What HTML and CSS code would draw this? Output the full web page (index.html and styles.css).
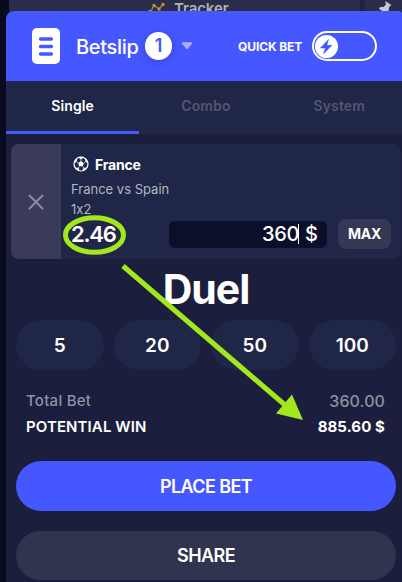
FILE: index.html
```
<!DOCTYPE html>
<html lang="en">
<head>
<meta charset="utf-8">
<title>Betslip</title>
<link rel="stylesheet" href="styles.css">
</head>

<body>

<div class="page">
  <div class="backdrop">
    <div class="backdrop__tab">
      <svg class="backdrop__chart" width="18" height="16" viewBox="0 0 18 16">
        <path d="M2 14 6 6.500 11 10 15 5.500" fill="none" stroke="#a98a35" stroke-width="1.300"/>
        <g fill="#b8932e">
          <circle cx="2" cy="12.500" r="1.700"/>
          <circle cx="6" cy="6.500" r="1.700"/>
          <circle cx="11" cy="10" r="1.700"/>
          <circle cx="15" cy="5.500" r="1.700"/>
        </g>
      </svg>
      <span class="backdrop__text">Tracker</span>
    </div>
    <div class="backdrop__pin">
      <svg width="18" height="18" viewBox="0 0 18 18">
        <path d="M9 1 15.500 5 13.500 6.500 12.500 10 13.500 13 11.500 14 3 9 4 7 7.500 7 10 4.500Z" fill="#c7c8cf"/>
      </svg>
    </div>
  </div>

  <div class="betslip">
    <header class="header">
      <svg class="header__icon" width="28" height="36" viewBox="0 0 28 36">
        <rect width="28" height="36" rx="5" fill="#fff"/>
        <path d="M8.500 11h11M8.500 18.500h11M8.500 26h11" stroke="#4558ff" stroke-width="3.300" stroke-linecap="round"/>
      </svg>
      <h1 class="header__title">Betslip</h1>
      <span class="header__count">1</span>
      <svg class="header__caret" width="12" height="8" viewBox="0 0 12 8">
        <path d="M1.500 1h9L6 6.500Z" fill="#a6afff" stroke="#a6afff" stroke-width="1.500" stroke-linejoin="round"/>
      </svg>
      <span class="header__quick">QUICK BET</span>
      <span class="switch">
        <span class="switch__knob">
          <svg width="23" height="23" viewBox="0 0 23 23">
            <path d="M13.500 4.500 5.500 13h5L8.500 18.800 17 10.300h-5.200Z" fill="#4558ff" stroke="#4558ff" stroke-width=".6" stroke-linejoin="round"/>
          </svg>
        </span>
      </span>
    </header>

    <nav class="tabs">
      <span class="tabs__item tabs__item--active">Single</span>
      <span class="tabs__item">Combo</span>
      <span class="tabs__item">System</span>
    </nav>

    <section class="bet">
      <div class="bet__remove">
        <svg width="16" height="16" viewBox="0 0 16 16">
          <path d="M1.500 1.500l13 13M14.500 1.500l-13 13" stroke="#8b8c9f" stroke-width="2" stroke-linecap="round"/>
        </svg>
      </div>
      <div class="bet__body">
        <div class="bet__pick">
          <svg width="16" height="16" viewBox="0 0 16 16">
            <circle cx="8" cy="8" r="7" fill="none" stroke="#fff" stroke-width="1.200"/>
            <path d="M8 5 10.800 7 9.800 10.300H6.200L5.200 7Z" fill="#fff"/>
            <path d="M5.300 1.300 8 3l2.700-1.700ZM1 7l2.300-1.500.5-3ZM15 7l-2.300-1.500-.5-3ZM2.500 12l3 .2.500 2.500ZM13.500 12l-3 .2-.5 2.500Z" fill="#fff" stroke="#fff" stroke-width=".7"/>
            <path d="M8 3v2M3.300 5.700 5 7M12.700 5.700 11 7M5.300 12.300l.8-1.800M10.700 12.300l-.8-1.800" stroke="#fff" stroke-width=".7"/>
          </svg>
          <span class="bet__team">France</span>
        </div>
        <p class="bet__match">France vs Spain</p>
        <p class="bet__market">1x2</p>
        <div class="bet__row">
          <span class="bet__odds">2.46</span>
          <div class="stake">
            <span class="stake__value">360</span>
            <span class="stake__caret"></span>
            <span class="stake__currency">$</span>
          </div>
          <span class="bet__max">MAX</span>
        </div>
      </div>
    </section>

    <div class="brand">Duel</div>

    <div class="chips">
      <span class="chips__item">5</span>
      <span class="chips__item">20</span>
      <span class="chips__item">50</span>
      <span class="chips__item">100</span>
    </div>

    <div class="totals">
      <div class="totals__row totals__row--muted">
        <span class="totals__label">Total Bet</span>
        <span class="totals__value">360.00</span>
      </div>
      <div class="totals__row totals__row--win">
        <span class="totals__label">POTENTIAL WIN</span>
        <span class="totals__value">885.60 $</span>
      </div>
    </div>

    <div class="button button--primary">PLACE BET</div>
    <div class="button button--share">SHARE</div>
  </div>

  <!-- odds marker and arrow to the potential win -->
  <svg class="marker" width="402" height="582" viewBox="0 0 402 582">
    <ellipse cx="94.500" cy="235" rx="29" ry="17.300" fill="none" stroke="#a3e81c" stroke-width="5"/>
    <path d="M123 266 285 405" stroke="#a3e81c" stroke-width="5"/>
    <path d="M303 420 276 413.500 292 394.500Z" fill="#a3e81c"/>
  </svg>
</div>

</body>

</html>
```
FILE: styles.css
```
/* reset */
body,div,h1,p,nav,section,header{margin:0;padding:0}
svg{display:block;flex-shrink:0;}

/* page */
body{
  --blue: #4558ff;
  --panel: #1b1e3c;
  --surface: #202647;
  --strip: #393b59;
  --muted: #9192a3;

  font-family:Inter,"Liberation Sans",sans-serif;
  font-feature-settings:"calt" 0;
  color:#fff;
  background-color:#080b20;
}
.page{position:relative;width:402px;height:582px;overflow:hidden;box-sizing:border-box;padding:11px 0 0 6px;}
.backdrop{position:absolute;left:9px;top:0;width:393px;height:20px;display:flex;gap:5px;background-color:#202240;}
.backdrop__tab{width:351px;background-color:#2b2c49;display:flex;align-items:flex-start;}
.backdrop__chart{margin:-1px 0 0 139px;}
.backdrop__text{margin-left:8px;font-size:15px;line-height:18px;font-weight:600;letter-spacing:-.1px;color:#b3b1b1;}
.backdrop__pin{flex:1;background-color:#2b2c49;padding-left:11px;}

.betslip{position:relative;width:396px;height:571px;background-color:var(--panel);border-radius:8px 3px 0 0;overflow:hidden;}

/* header */
.header{height:70px;display:flex;align-items:center;background-color:var(--blue);box-sizing:border-box;padding-left:26px;}
.header__title{width:63px;margin-left:16px;padding-top:2px;font-size:20px;line-height:24px;font-weight:500;letter-spacing:-.3px;white-space:nowrap;}
.header__count{width:27px;height:28px;margin-left:6px;border-radius:14px;background-color:#fff;color:var(--blue);font-size:18px;line-height:27px;font-weight:600;text-align:center;box-shadow:0 2px 8px rgba(20,30,140,.3);}
.header__caret{margin-left:9px;}
.header__quick{width:65px;margin-left:45px;font-size:12px;font-weight:700;letter-spacing:-.1px;white-space:nowrap;}
.switch{width:65px;height:30px;margin-left:9px;box-sizing:border-box;border:2px solid #fff;border-radius:15px;display:flex;align-items:center;padding-left:1px;}
.switch__knob{width:23px;height:23px;border-radius:50%;background-color:#fff;}

/* tabs */
.tabs{height:53px;display:grid;grid-template-columns:repeat(3,133.3px);background-color:var(--surface);}
.tabs__item{box-sizing:border-box;height:53px;border-bottom:3px solid transparent;font-size:14px;line-height:50px;font-weight:600;letter-spacing:.1px;text-align:center;color:#53566e;}
.tabs__item--active{color:#fff;border-color:var(--blue);}

/* bet card */
.bet{height:115px;margin:10px 1px 0 5px;border-radius:8px;background-color:var(--surface);display:flex;overflow:hidden;}
.bet__remove{width:50px;background-color:var(--strip);display:flex;align-items:center;justify-content:center;}
.bet__body{flex:1;padding:11px 10px 0;}
.bet__pick{height:18px;display:flex;align-items:center;padding-left:2px;gap:6px;}
.bet__team{font-size:14px;font-weight:700;letter-spacing:-.2px;}
.bet__match,.bet__market{font-size:13px;color:#b5b6c3;white-space:nowrap;}
.bet__match{margin-top:7px;line-height:18px;}
.bet__market{margin-top:3px;line-height:17px;}
.bet__row{display:flex;align-items:center;height:30px;margin-top:1px;}
.bet__odds{width:98px;font-size:22px;line-height:30px;font-weight:600;letter-spacing:-1.2px;}
.stake{width:158px;height:27px;box-sizing:border-box;border-radius:6px;background-color:#0c0f29;display:flex;align-items:center;justify-content:flex-end;padding-right:9px;font-size:20px;font-weight:500;}
.stake__value{letter-spacing:-.3px;}
.stake__caret{width:1px;height:20px;margin-left:-1px;background-color:#fff;}
.stake__currency{margin-left:6px;}
.bet__max{width:53px;height:30px;margin-left:11px;border-radius:8px;background-color:#343855;font-size:14px;line-height:30px;font-weight:700;letter-spacing:-.3px;text-align:center;}

.brand{height:51px;margin-top:4px;font-size:41px;line-height:53px;font-weight:700;letter-spacing:-1px;text-align:center;padding-left:4px;}

/* quick stakes */
.chips{display:grid;grid-template-columns:repeat(4,1fr);gap:10px;margin:6px 6px 0 10px;}
.chips__item{height:50px;border-radius:25px;background-color:var(--surface);font-size:19px;line-height:51px;font-weight:600;text-align:center;}

/* totals */
.totals{padding:18px 17px 0 20px;}
.totals__row{display:flex;justify-content:space-between;height:26px;line-height:26px;}
.totals__row--muted{color:var(--muted);font-size:15px;font-weight:500;letter-spacing:.25px;}
.totals__row--muted .totals__value{font-size:16px;letter-spacing:.1px;}
.totals__row--win{font-size:15px;font-weight:600;letter-spacing:.1px;}
.totals__row--win .totals__value{font-weight:700;}

.button{height:50px;margin:21px 6px 0 10px;border-radius:25px;font-size:18px;line-height:51px;font-weight:600;letter-spacing:-.6px;text-align:center;}
.button--primary{background-color:var(--blue);}
.button--share{height:49px;margin-top:20px;line-height:50px;background-color:#31344e;}

.marker{position:absolute;left:0;top:0;}
```
